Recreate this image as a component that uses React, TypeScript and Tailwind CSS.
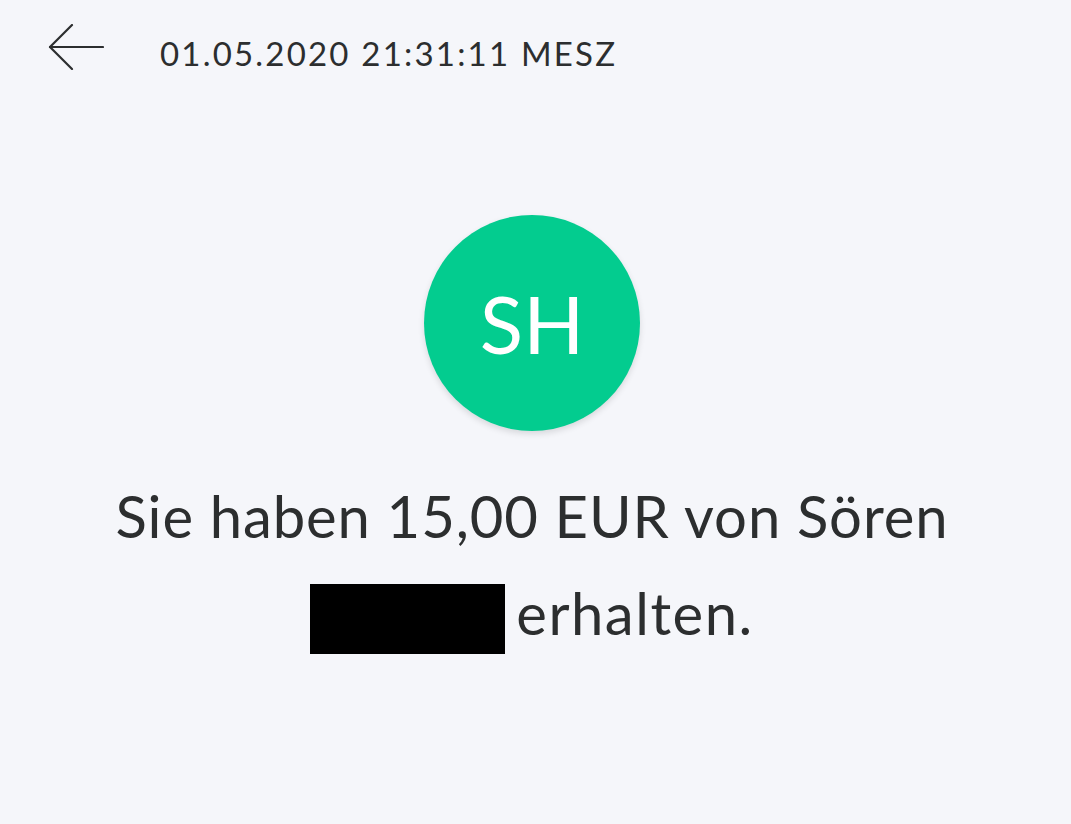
import React from "react";

export default function App() {
  return (
    <div className="w-[1071px] h-[824px] bg-[#f5f6fa] overflow-hidden text-[#2c2e2f]" style={{ fontFamily: "Lato, 'Open Sans', sans-serif" }}>
      <div className="flex items-center h-[94px] pl-[48px]">
        <svg width="56" height="46" viewBox="0 0 56 46" fill="none" stroke="#2c2e2f" strokeWidth="2.2" strokeLinecap="round" strokeLinejoin="round">
          <path d="M55 23H2" />
          <path d="M24 1L2 23L24 45" />
        </svg>
        <div className="ml-[56px] pt-[12px] text-[33px] tracking-[2.2px] leading-none">01.05.2020 21:31:11 MESZ</div>
      </div>
      <div className="pr-[7px]">
        <div className="flex justify-center mt-[121px]">
          <div className="w-[216px] h-[216px] rounded-full bg-[#03cc8f] shadow-[0_3px_6px_rgba(0,0,0,0.12)] flex items-center justify-center text-white text-[80px] leading-none">
            SH
          </div>
        </div>
        <div className="mt-[36px] text-center text-[58px] tracking-[0.9px] leading-[97px]">
          <div>Sie haben 15,00 EUR von Sören</div>
          <div className="flex justify-center items-center">
            <span className="inline-block w-[195px] h-[70px] bg-black mr-[11px] translate-y-[6px]" />
            <span className="tracking-[1.5px]">erhalten.</span>
          </div>
        </div>
      </div>
    </div>
  );
}
